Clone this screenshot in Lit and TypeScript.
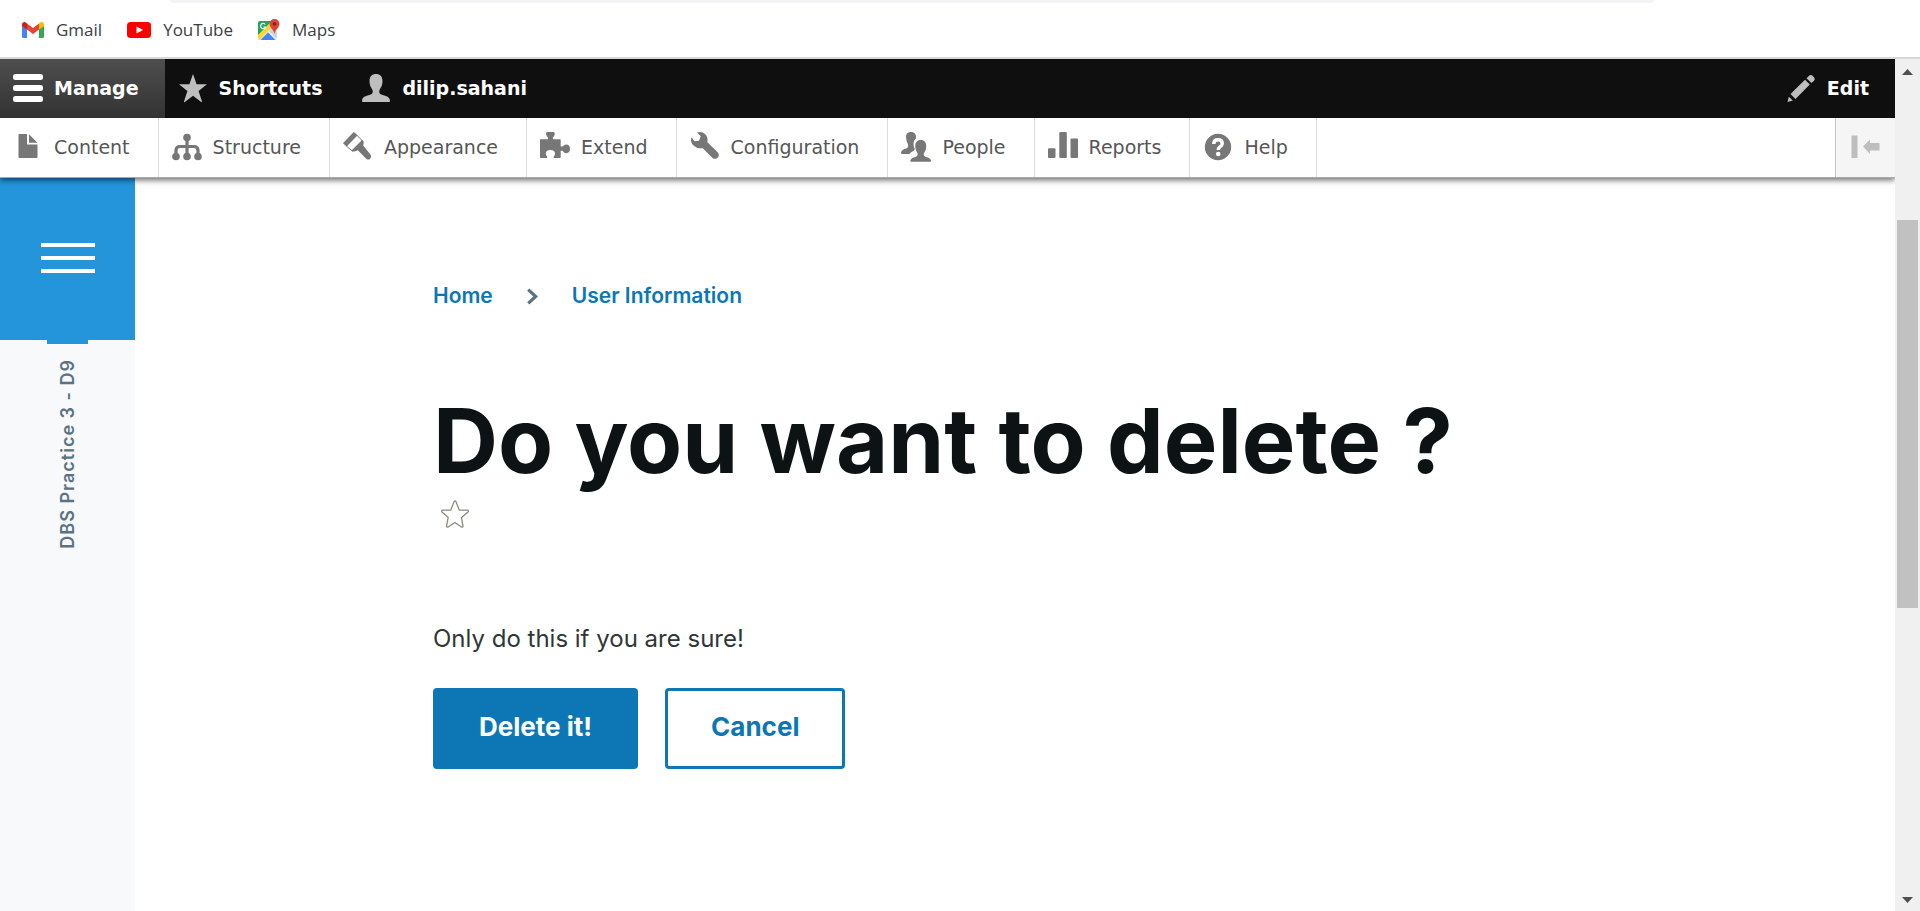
import { LitElement, html, css, svg } from "lit";
import { customElement } from "lit/decorators.js";

const gmail = html`<svg class="fav" viewBox="0 0 22 16" aria-hidden="true">
  <path fill="#4285f4" d="M0 3.5 5 7v9H1.500Q0 16 0 14.500z"/>
  <path fill="#34a853" d="M22 3.500 17 7v9h3.500Q22 16 22 14.500z"/>
  <path fill="#ea4335" d="M5 1.500 11 6l6-4.500V7.500L11 12 5 7.500z"/>
  <path fill="#c5221f" d="M0 4V2.500C0 .2 2.500-.8 4.200.8L5 1.500v6z"/>
  <path fill="#fbbc04" d="M22 4V2.500C22 .2 19.500-.8 17.800.8L17 1.500v6z"/>
</svg>`;

const youtube = html`<svg class="fav" viewBox="0 0 24 16" aria-hidden="true">
  <rect width="24" height="16" rx="3.500" fill="#f00"/>
  <path fill="#fff" d="M9.500 4.500 16 8l-6.500 3.500z"/>
</svg>`;

const maps = html`<svg class="fav tall" viewBox="0 0 22 22" aria-hidden="true">
  <rect y="2" width="19" height="19" rx="2" fill="#e8eaed"/>
  <path fill="#1fa463" d="M2 2h12L0 17V4q0-2 2-2z"/>
  <path fill="#fdd835" d="m0 16 12-12 3 3L1.500 21Q0 20.500 0 19z"/>
  <path fill="#4285f4" d="M2.500 21 10 13.500l7.500 7.500z"/>
  <path fill="#cfd4da" d="m11 12 4-4 4 6v5.500z"/>
  <path d="M7.300 5.500A2.600 2.600 0 1 0 7.600 8H5.300" fill="none" stroke="#fff" stroke-width="1.200"/>
  <path fill="#db4437" d="M16.500 0a5 5 0 0 1 5 5c0 3.500-4 5-5 10-1-5-5-6.500-5-10a5 5 0 0 1 5-5z"/>
  <circle cx="16.500" cy="5" r="1.800" fill="#7b231c"/>
</svg>`;

const burger = svg`<rect y="1" width="30" height="6" rx="2.500"/><rect y="12" width="30" height="6" rx="2.500"/><rect y="23" width="30" height="6" rx="2.500"/>`;
const star = svg`<path d="m15 1 3.600 10.300H29l-8.400 6.600 3.400 10.600q.2 1-.8.5L15 22.800 6.800 29q-1 .5-.8-.5l3.400-10.600L1 11.300h10.400z"/>`;
const person = svg`<path d="M15 1c4 0 6.500 2.500 6.500 7 0 3.500-1 6-2.800 8.500-.8 1.500-.5 4 1 4.800C23 23 29 23 29 28q0 1-1 1H2q-1 0-1-1c0-5 6-5 9.300-6.700 1.500-.8 1.800-3.300 1-4.800C9.500 14 8.500 11.500 8.500 8c0-4.500 2.500-7 6.500-7z"/>`;
const pencil = svg`<path d="m1.500 29 1.300-5.200 4 3.700zM4.500 21 19 6.800l4.800 4.800L9.500 26zM20.500 5.300 22.800 3q2-2 4.500.5T28 7.800l-2.500 2.300z"/>`;
const file = svg`<path d="M6.500 3H14v10.500h10.500V26q0 1-1 1h-17q-1 0-1-1V4q0-1 1-1zM16 3.200l8.500 8.600H16z"/>`;
const tree = svg`<circle cx="15" cy="6.500" r="3.800"/><circle cx="4" cy="25.500" r="3.800"/><circle cx="15" cy="25.500" r="3.800"/><circle cx="26" cy="25.500" r="3.800"/>
  <path d="M15 7v18M4 25v-5.500q0-4 4-4h14q4 0 4 4V25" fill="none" stroke="currentColor" stroke-width="3.200"/>`;
const brush = svg`<path d="M0 12.300 10.700 1 14.500 4 3.500 15.500z"/>
  <path d="M14 4.300 19.500 10 9.300 20 3.300 15z" fill="none" stroke="currentColor"/>
  <path d="m19 9 1.500 1q.5 1.500-.3 4.500l7.600 9.500q1 2.500-1 4.200-2 1-3.600-.5l-8.400-8.500q-3.800 1.800-5.800 1L8.500 19.500z"/>`;
const puzzle = svg`<path d="M0 9q0-.7.700-.7H8V6.500Q6 4.500 6 2.500 6 1 7.500 1h5.800q1.500 0 1.500 1.500 0 2-2 4v1.800h7.200q.7 0 .7.700v6.500h1.800q1.800-2 3.800-2 3.700.2 3.700 4.200t-3.700 4.500q-2 0-3.800-2.500h-1.800v6.600q0 .7-.7.700h-6.300v-1.500q1.300-1 1.300-2.800 0-3.600-4.600-3.600t-4.600 3.600q0 1.800 1.300 2.800V27H.700Q0 27 0 26.300z"/>`;
const wrench = svg`<path d="M7 1.500Q12 0 15.500 3.500 18.500 7 17.200 11L28 21.800q1.800 2.600-.2 4.800t-5 .6L12.500 17Q7 18 3.500 14.500 0 11 1.500 6.300l3 4 4.500-.5 1.700-4.500z"/>`;
const people = svg`<path d="M10 1c3.500 0 5 2.300 5 5v1.300Q12.500 9.500 12.500 13q0 2.800 1.300 5L13 19.500q-3 1-4.500 3.500H1q-1 0-1-1 0-2.700 3.500-4Q7.800 17 7.200 14 5 10 5 6q0-5 5-5z"/>
  <path d="M19.800 9c3.600 0 5.400 2.500 5.400 6 0 3-.8 5-2.200 7-.8 3 .5 3.500 3 4.200 3 .8 4 2.300 4 3.800h0q0 .8-.8.800H10.300q-1 0-1-.8c0-1.500 1-3 4-3.800 2.500-.7 3.800-1.200 3.200-4.200-1.400-2-2.200-4-2.200-7 0-3.500 1.900-6 5.500-6z"/>`;
const bars = svg`<rect y="17.300" width="7.500" height="9.700" rx="1"/><rect x="11.300" y="1" width="7.500" height="26" rx="1"/><rect x="22.500" y="7.500" width="7.500" height="19.500" rx="1"/>`;
const help = svg`<circle cx="15" cy="16" r="13.200"/>
  <path d="M10.800 13q0-4.200 4.400-4.200 4 0 4 3.600 0 2-2.200 3.500-1.800 1.200-1.800 3.100" fill="none" stroke="#fff" stroke-width="3.500"/><circle cx="15.200" cy="23" r="2.300" fill="#fff"/>`;
const collapse = svg`<path d="M1.500 4.500h6v22.500h-6zM13 15.500l7-7v3.500h9.500v7.500H20V23z"/>`;

const icon = (shape: unknown) =>
  html`<svg class="icon" viewBox="0 0 30 30" fill="currentColor" aria-hidden="true">${shape}</svg>`;

const trayItems = [
  { label: "Content", shape: file },
  { label: "Structure", shape: tree },
  { label: "Appearance", shape: brush },
  { label: "Extend", shape: puzzle },
  { label: "Configuration", shape: wrench },
  { label: "People", shape: people },
  { label: "Reports", shape: bars },
  { label: "Help", shape: help },
];

@customElement("bookmarks-bar")
export class BookmarksBar extends LitElement {
  static styles = css`
    :host {
      display: block;
      position: relative;
      z-index: 2;
      border-bottom: 2px solid #d8d8d8;
      background: #fff;
      font: 17px/24px "Open Sans", sans-serif;
    }
    .omnibox {
      height: 3px;
      margin: 0 266px 0 170px;
      border-radius: 0 0 16px 16px;
      background: #f1f3f4;
    }
    .links {
      display: flex;
      gap: 25px;
      padding: 15px 22px;
    }
    a {
      display: flex;
      align-items: center;
      gap: 12px;
      color: #3c4043;
      text-decoration: none;
    }
    .fav {
      height: 16px;
    }
    .tall {
      height: 22px;
    }
  `;
  render() {
    return html`<div class="omnibox"></div>
      <nav class="links" aria-label="Bookmarks">
        <a href="#gmail">${gmail}Gmail</a>
        <a href="#youtube">${youtube}YouTube</a>
        <a href="#maps">${maps}Maps</a>
      </nav>`;
  }
}

@customElement("admin-toolbar")
export class AdminToolbar extends LitElement {
  static styles = css`
    :host {
      display: block;
      position: relative;
      z-index: 1;
      font: 19px/59px "DejaVu Sans", sans-serif;
      box-shadow: 0 2px 6px rgba(0, 0, 0, 0.6);
    }
    .bar,
    .tray {
      display: flex;
      height: 59px;
    }
    .bar {
      background: #0f0f0f;
      font-weight: bold;
    }
    .tray {
      background: #fff;
      border-bottom: 1px solid #a9a9a9;
    }
    .item,
    .toggle {
      display: flex;
      align-items: center;
      gap: 11px;
      box-sizing: border-box;
      border: 0;
      padding: 0 26px 0 13px;
      background: none;
      font: inherit;
      text-decoration: none;
      white-space: nowrap;
    }
    .bar .item {
      color: #bebebe;
    }
    .bar .label {
      color: #fff;
    }
    .bar .active {
      color: #fff;
      background: linear-gradient(#4e4e4e, #333);
    }
    .tray .item {
      padding-right: 28px;
      border-right: 1px solid #ddd;
      color: #777;
    }
    .tray .label {
      color: #565656;
    }
    .end {
      margin-left: auto;
    }
    .tray .toggle {
      width: 60px;
      padding: 0 14px;
      border-left: 1px solid #c4c4c4;
      background: #f5f5f5;
      color: #bebebe;
    }
    .icon {
      flex: none;
      width: 30px;
      height: 30px;
      margin-bottom: 1px;
      overflow: visible;
    }
    .tray .icon {
      margin-bottom: 3px;
    }
  `;
  render() {
    return html`<nav class="bar" aria-label="Toolbar">
        <button class="item active">${icon(burger)}<span class="label">Manage</span></button>
        <button class="item">${icon(star)}<span class="label">Shortcuts</span></button>
        <button class="item">${icon(person)}<span class="label">dilip.sahani</span></button>
        <button class="item end">${icon(pencil)}<span class="label">Edit</span></button>
      </nav>
      <nav class="tray" aria-label="Administration menu">
        ${trayItems.map(
          (i) => html`<a class="item" href="#${i.label}">${icon(i.shape)}<span class="label">${i.label}</span></a>`
        )}
        <button class="toggle end" aria-label="Vertical orientation">${icon(collapse)}</button>
      </nav>`;
  }
}

@customElement("site-rail")
export class SiteRail extends LitElement {
  static styles = css`
    :host {
      display: flex;
      flex-direction: column;
      align-items: center;
      flex: none;
      width: 135px;
      background: #f7f9fb;
    }
    .menu {
      display: grid;
      place-content: center;
      gap: 9px;
      width: 100%;
      height: 162px;
      border: 0;
      padding: 0 0 2px;
      background: #2494db;
    }
    .line {
      width: 54px;
      height: 4px;
      background: #fff;
    }
    .tab {
      width: 41px;
      height: 4px;
      background: #2494db;
    }
    .name {
      margin-top: 15px;
      writing-mode: vertical-rl;
      transform: rotate(180deg);
      color: #5b7282;
      font: 600 18px/24px Inter, sans-serif;
      letter-spacing: 1px;
      text-decoration: none;
    }
  `;
  render() {
    return html`<button class="menu" aria-label="Main menu">
        <span class="line"></span><span class="line"></span><span class="line"></span>
      </button>
      <span class="tab"></span>
      <a class="name" href="#front">DBS Practice 3 - D9</a>`;
  }
}

@customElement("confirm-page")
export class ConfirmPage extends LitElement {
  static styles = css`
    :host {
      display: block;
      flex: 1;
      padding: 104px 40px 40px 298px;
      font-family: Inter, sans-serif;
    }
    .crumbs {
      display: flex;
      align-items: center;
      gap: 34px;
      font: 600 21px/28px Inter, sans-serif;
    }
    .crumbs a {
      color: #0d77b5;
      text-decoration: none;
    }
    .chevron {
      width: 11px;
      height: 17px;
    }
    h1 {
      margin: 77px 0 0;
      color: #0d1214;
      font-size: 90px;
      line-height: 108px;
      font-weight: 700;
    }
    .fav {
      display: block;
      border: 0;
      padding: 0;
      margin: 5px 8px 0;
      background: none;
    }
    .fav svg {
      display: block;
      width: 28px;
      height: 28px;
    }
    p {
      margin: 93px 0 31px;
      color: #313637;
      font-size: 24px;
      line-height: 36px;
    }
    .actions {
      display: flex;
      gap: 27px;
    }
    .btn {
      border: 3px solid #0d77b5;
      border-radius: 4px;
      padding: 22px 43px 25px;
      background: #fff;
      color: #0d77b5;
      font: 700 26px/28px Inter, sans-serif;
    }
    .primary {
      background: #0d77b5;
      color: #fff;
    }
  `;
  render() {
    return html`<nav class="crumbs" aria-label="Breadcrumb">
        <a href="#home">Home</a>
        <svg class="chevron" viewBox="0 0 10 16" aria-hidden="true">
          <path d="m1 1.500 7 6.500-7 6.500" fill="none" stroke="#5b7282" stroke-width="3" />
        </svg>
        <a href="#user-information">User Information</a>
      </nav>
      <h1>Do you want to delete ?</h1>
      <button class="fav" aria-label="Add to shortcuts">
        <svg viewBox="0 0 28 28" aria-hidden="true">
          <path
            d="M13 1.700q1-1.500 2 0l3.300 8.500h8.200q1.500.5.500 1.800l-6.500 5.500 1.500 8.800q-.3 1.300-1.700.7L14 22.500 7.200 27q-1.500.5-1.700-.8l1.700-8.700L1 12q-1-1.300.5-1.800h8.200z"
            fill="none" stroke="#8d8a78" stroke-width="1.300" />
        </svg>
      </button>
      <p>Only do this if you are sure!</p>
      <div class="actions">
        <button class="btn primary">Delete it!</button>
        <button class="btn">Cancel</button>
      </div>`;
  }
}

@customElement("app-root")
export class AppRoot extends LitElement {
  static styles = css`
    :host {
      display: flex;
      flex-direction: column;
      height: 100vh;
      overflow: hidden;
      background: #fff;
    }
    .window {
      display: flex;
      flex: 1;
      min-height: 0;
    }
    .site {
      display: flex;
      flex-direction: column;
      flex: 1;
      min-width: 0;
    }
    .body {
      display: flex;
      flex: 1;
    }
    .scroll {
      display: flex;
      flex-direction: column;
      position: relative;
      z-index: 2;
      width: 21px;
      padding: 10px 2px 8px;
      background: #f0f0f0;
    }
    .arrow {
      width: 11px;
      height: 6px;
      margin: 0 auto;
      fill: #505050;
    }
    .before {
      flex: 145;
    }
    .thumb {
      flex: 388;
      background: #c1c1c1;
    }
    .after {
      flex: 289;
    }
  `;
  render() {
    return html`<bookmarks-bar></bookmarks-bar>
      <div class="window">
        <div class="site">
          <admin-toolbar></admin-toolbar>
          <div class="body">
            <site-rail></site-rail>
            <confirm-page></confirm-page>
          </div>
        </div>
        <div class="scroll" aria-hidden="true">
          <svg class="arrow" viewBox="0 0 11 6"><path d="M0 6 5.500 0 11 6z" /></svg>
          <span class="before"></span>
          <span class="thumb"></span>
          <span class="after"></span>
          <svg class="arrow" viewBox="0 0 11 6"><path d="M0 0h11L5.500 6z" /></svg>
        </div>
      </div>`;
  }
}
